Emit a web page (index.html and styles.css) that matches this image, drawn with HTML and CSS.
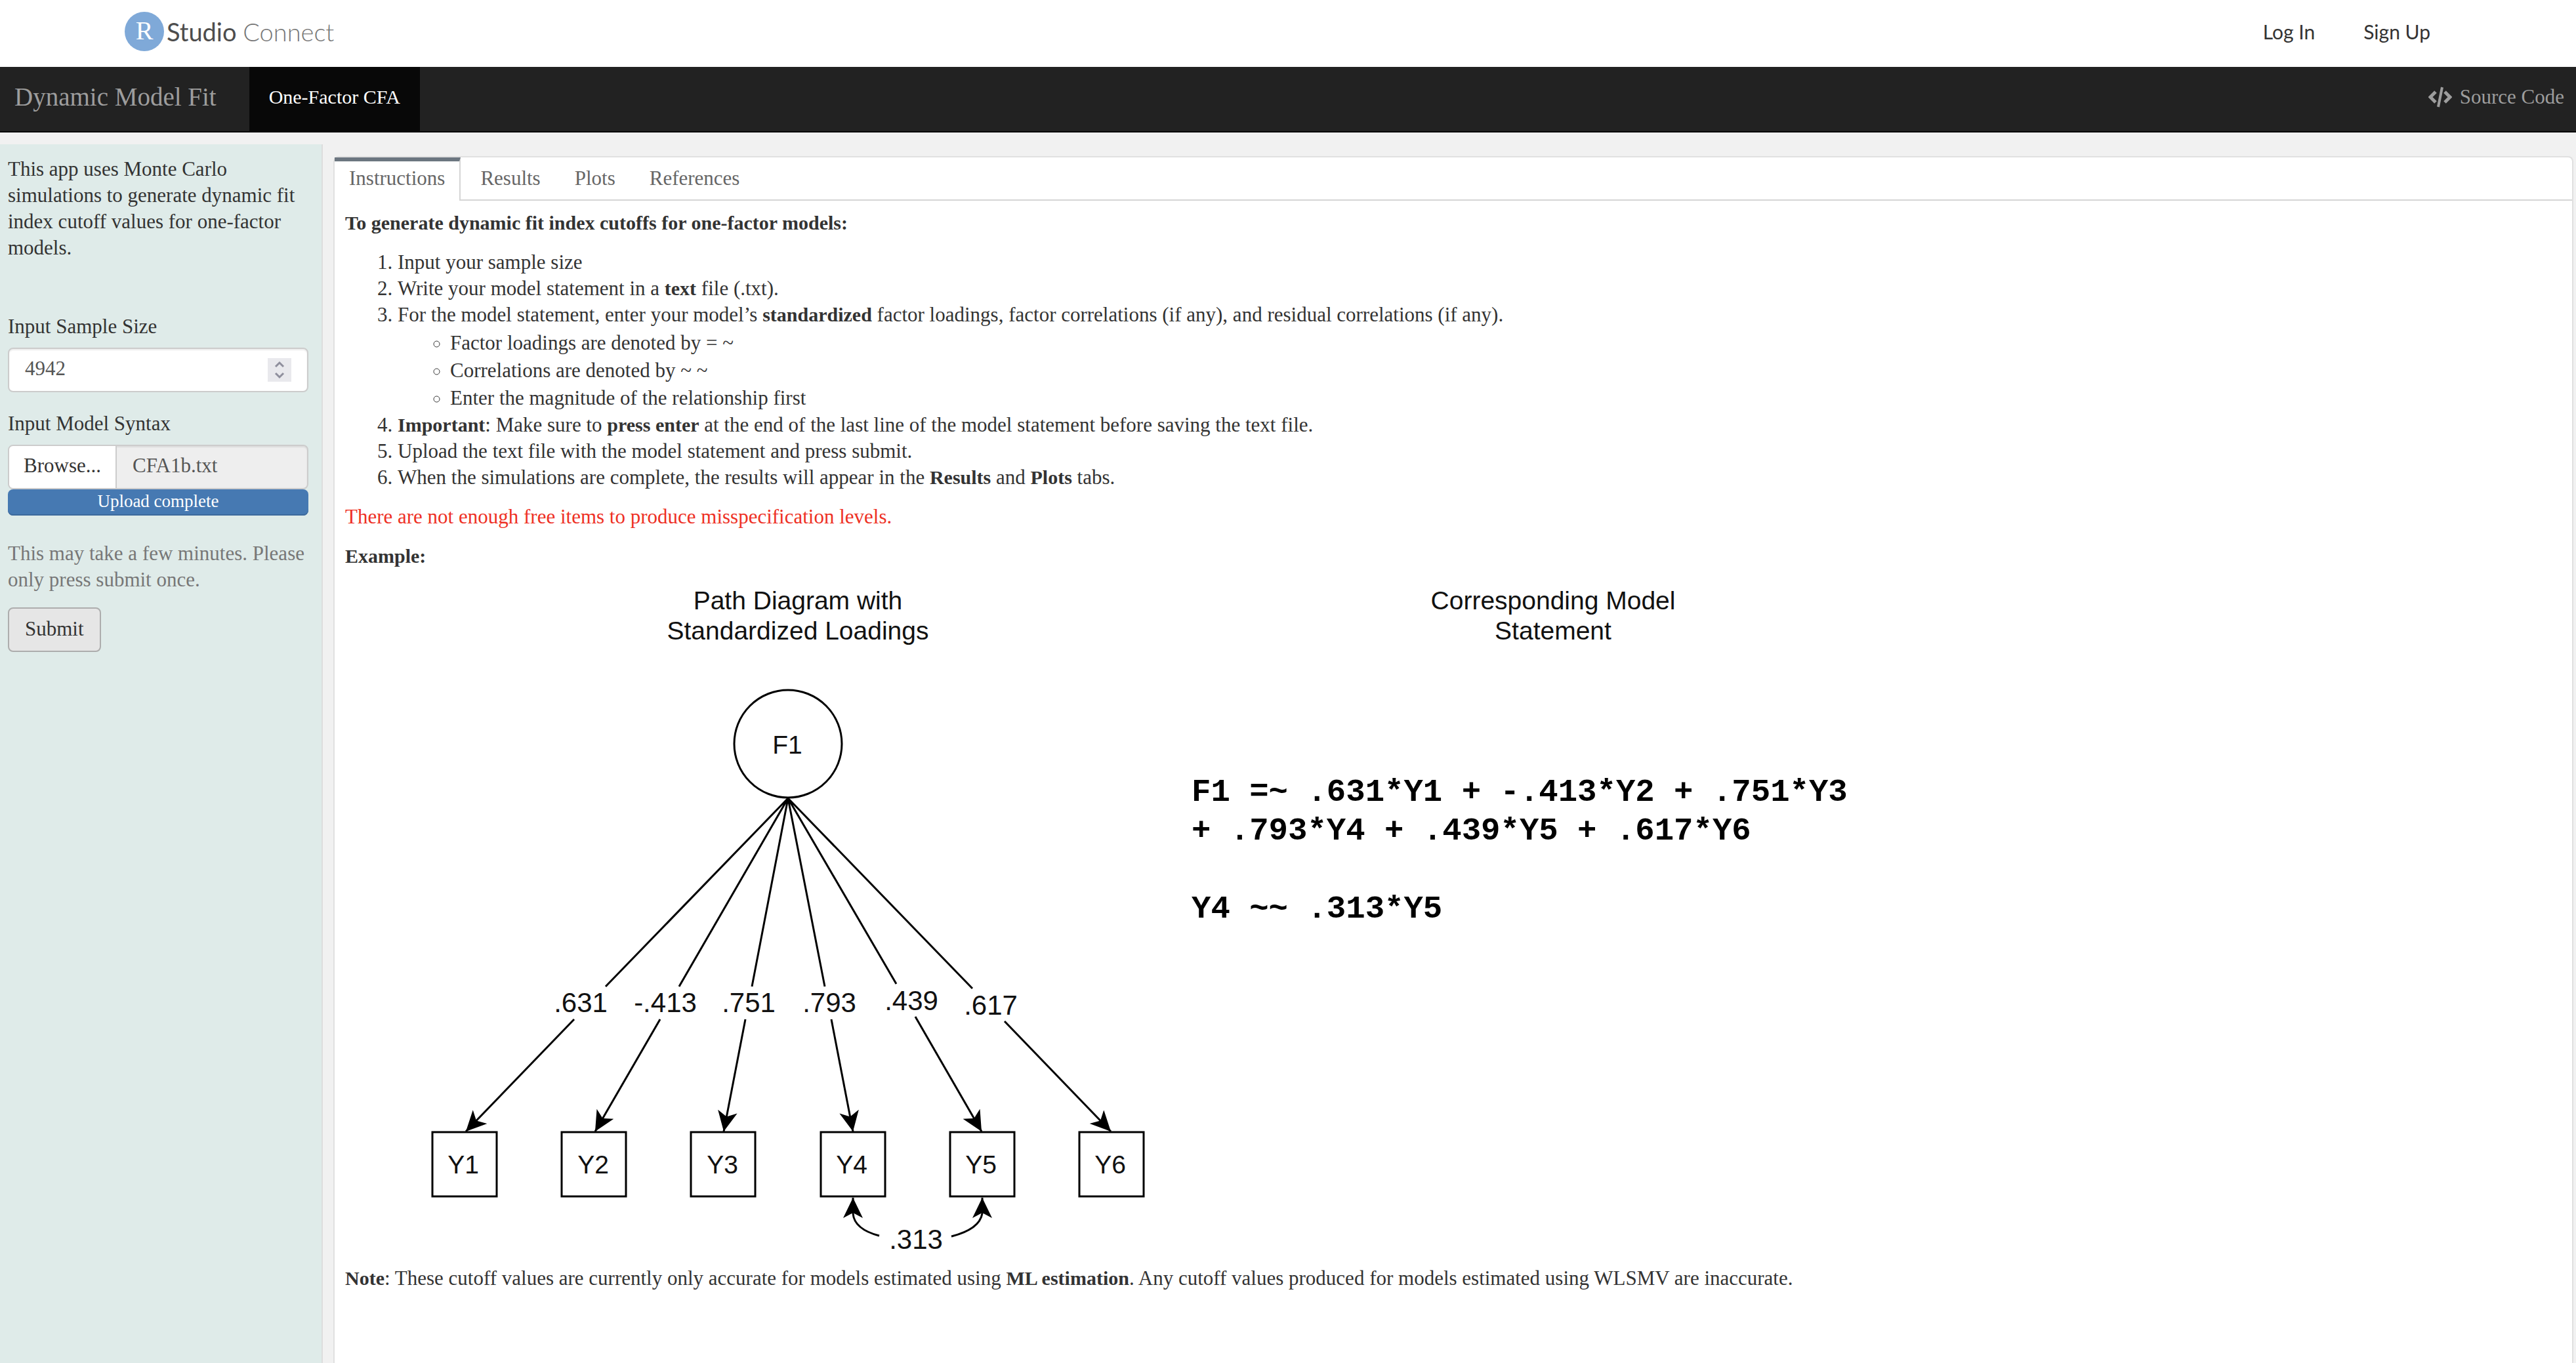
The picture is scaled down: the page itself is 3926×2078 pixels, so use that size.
FILE: index.html
```html
<!DOCTYPE html>
<html lang="en">
<head>
<meta charset="utf-8">
<title>Dynamic Model Fit</title>
<link rel="stylesheet" href="styles.css">
</head>
<body>
<header class="topbar">
  <a class="logo" href="#">
    <span class="logo-mark">R</span>
    <span class="logo-name">Studio <span class="logo-thin">Connect</span></span>
  </a>
  <nav class="account">
    <a href="#">Log In</a>
    <a href="#">Sign Up</a>
  </nav>
</header>
<nav class="navbar">
  <a class="brand" href="#">Dynamic Model Fit</a>
  <a class="nav-item active" href="#">One-Factor CFA</a>
  <a class="source" href="#">
    <svg class="code-icon" viewBox="0 0 36 32" aria-hidden="true">
      <path d="M11 8 3 16l8 8M25 8l8 8-8 8" fill="none" stroke="currentColor" stroke-width="5"/>
      <path d="M21 1 15 31" fill="none" stroke="currentColor" stroke-width="4"/>
    </svg>
    Source Code
  </a>
</nav>
<div class="layout">
  <aside class="sidebar">
    <p class="intro">This app uses Monte Carlo simulations to generate dynamic fit index cutoff values for one-factor models.</p>
    <form class="form">
      <div class="field">
        <label for="size">Input Sample Size</label>
        <div class="control number">
          <input id="size" type="number" value="4942">
          <span class="stepper" aria-hidden="true">
            <svg viewBox="0 0 36 36"><path d="M12 13l6-6 6 6M12 23l6 6 6-6" fill="none" stroke="#8f8f9d" stroke-width="3"/></svg>
          </span>
        </div>
      </div>
      <div class="field">
        <label for="file">Input Model Syntax</label>
        <div class="control upload">
          <button type="button" class="browse">Browse...</button>
          <input id="file" type="text" value="CFA1b.txt" readonly>
        </div>
        <div class="progress">Upload complete</div>
      </div>
      <p class="hint">This may take a few minutes. Please only press submit once.</p>
      <button type="submit" class="submit">Submit</button>
    </form>
  </aside>
  <main class="panel">
    <nav class="tabs">
      <a class="tab active" href="#">Instructions</a>
      <a class="tab" href="#">Results</a>
      <a class="tab" href="#">Plots</a>
      <a class="tab" href="#">References</a>
    </nav>
    <div class="content">
      <p><b>To generate dynamic fit index cutoffs for one-factor models:</b></p>
      <ol>
        <li>Input your sample size</li>
        <li>Write your model statement in a <b>text</b> file (.txt).</li>
        <li>For the model statement, enter your model’s <b>standardized</b> factor loadings, factor correlations (if any), and residual correlations (if any).
          <ul>
            <li>Factor loadings are denoted by = ~</li>
            <li>Correlations are denoted by ~ ~</li>
            <li>Enter the magnitude of the relationship first</li>
          </ul>
        </li>
        <li><b>Important</b>: Make sure to <b>press enter</b> at the end of the last line of the model statement before saving the text file.</li>
        <li>Upload the text file with the model statement and press submit.</li>
        <li>When the simulations are complete, the results will appear in the <b>Results</b> and <b>Plots</b> tabs.</li>
      </ol>
      <p class="error">There are not enough free items to produce misspecification levels.</p>
      <p><b>Example:</b></p>
      <svg class="diagram" viewBox="526 888 2400 1031" role="img" aria-label="Path diagram and model statement">
        <defs>
          <marker id="arrow" markerUnits="userSpaceOnUse" markerWidth="40" markerHeight="40" refX="31" refY="15" orient="auto-start-reverse" viewBox="0 0 40 40">
            <path d="M31 15 0 0 8 15 0 30z"/>
          </marker>
        </defs>
        <g class="title">
          <text x="1216" y="929">Path Diagram with</text>
          <text x="1216" y="975">Standardized Loadings</text>
          <text x="2367" y="929">Corresponding Model</text>
          <text x="2367" y="975">Statement</text>
        </g>
        <g class="shape">
          <circle cx="1201" cy="1134" r="82"/>
          <rect x="659" y="1726" width="98" height="98"/>
          <rect x="856" y="1726" width="98" height="98"/>
          <rect x="1053" y="1726" width="98" height="98"/>
          <rect x="1251" y="1726" width="98" height="98"/>
          <rect x="1448" y="1726" width="98" height="98"/>
          <rect x="1645" y="1726" width="98" height="98"/>
          <path d="M923 1504 1201 1217 1035 1504M1146 1504 1201 1217 1257 1504M1366 1500 1201 1217 1482 1507"/>
          <path marker-end="url(#arrow)" d="M875 1554 710 1725"/>
          <path marker-end="url(#arrow)" d="M1006 1554 907 1725"/>
          <path marker-end="url(#arrow)" d="M1136 1554 1103 1725"/>
          <path marker-end="url(#arrow)" d="M1267 1554 1300 1725"/>
          <path marker-end="url(#arrow)" d="M1395 1550 1496 1725"/>
          <path marker-end="url(#arrow)" d="M1531 1557 1693 1725"/>
          <path marker-start="url(#arrow)" d="M1300 1826V1850Q1302 1874 1340 1884"/>
          <path marker-start="url(#arrow)" d="M1497 1826V1850Q1493 1874 1450 1885"/>
        </g>
        <g class="node">
          <text x="1200" y="1149">F1</text>
          <text x="706" y="1789">Y1</text>
          <text x="904" y="1789">Y2</text>
          <text x="1101" y="1789">Y3</text>
          <text x="1298" y="1789">Y4</text>
          <text x="1495" y="1789">Y5</text>
          <text x="1692" y="1789">Y6</text>
        </g>
        <g class="weight">
          <text x="885" y="1543">.631</text>
          <text x="1014" y="1543">-.413</text>
          <text x="1141" y="1543">.751</text>
          <text x="1264" y="1543">.793</text>
          <text x="1389" y="1540">.439</text>
          <text x="1510" y="1547">.617</text>
          <text x="1396" y="1904">.313</text>
        </g>
        <g class="code">
          <text x="1816" y="1221">F1 =~ .631*Y1 + -.413*Y2 + .751*Y3</text>
          <text x="1816" y="1280">+ .793*Y4 + .439*Y5 + .617*Y6</text>
          <text x="1816" y="1399">Y4 ~~ .313*Y5</text>
        </g>
      </svg>
      <p><b>Note</b>: These cutoff values are currently only accurate for models estimated using <b>ML estimation</b>. Any cutoff values produced for models estimated using WLSMV are inaccurate.</p>
    </div>
  </main>
</div>
</body>
</html>
```
FILE: styles.css
```css
* { box-sizing: border-box; }
body {
  margin: 0;
  min-height: 100vh;
  display: flex;
  flex-direction: column;
  background: #f1f1f1;
  color: #333;
  font: 31px/40px "Palatino", "Liberation Serif", serif;
}
a { color: inherit; text-decoration: none; }
b { font-size: 30px; }
p { margin: 0 0 20px; }
input, button { font: inherit; color: inherit; }

.topbar {
  height: 102px;
  padding: 0 222px 6px 190px;
  display: flex;
  align-items: center;
  justify-content: space-between;
  background: #fff;
  font-family: "Lato", sans-serif;
  font-size: 30px;
}
.logo { display: flex; align-items: center; gap: 4px; }
.logo-mark {
  width: 60px;
  height: 60px;
  border-radius: 50%;
  background: #7fa9d8;
  color: #fff;
  font: 40px/58px "Liberation Serif", serif;
  text-align: center;
}
.logo-name { font-size: 38px; color: #4d4d4d; }
.logo-thin { font-weight: 300; color: #777; }
.account { display: flex; gap: 74px; }

.navbar {
  height: 100px;
  padding-right: 18px;
  display: flex;
  align-items: stretch;
  background: #222;
  border-bottom: 2px solid #080808;
  color: #9d9d9d;
  line-height: 92px;
}
.brand { padding: 0 50px 0 22px; font-size: 39px; }
.nav-item { padding: 0 30px; font-size: 30px; }
.nav-item.active { background: #080808; color: #fff; }
.source { margin-left: auto; display: flex; gap: 12px; }
.code-icon { width: 36px; height: 32px; margin-top: 30px; }

.layout { flex: 1; display: flex; align-items: stretch; gap: 16px; }
.sidebar {
  flex: 0 0 492px;
  min-width: 0;
  margin-top: 18px;
  padding: 18px 20px 18px 12px;
  background: #dfebe9;
  border-right: 2px solid #ddd;
}
.intro { margin-bottom: 80px; }
.field { margin-bottom: 28px; }
.field label { display: block; margin-bottom: 12px; }
.control {
  height: 68px;
  display: flex;
  border: 2px solid #ccc;
  border-radius: 8px;
  background: #fff;
  box-shadow: inset 0 2px 2px rgba(0, 0, 0, .075);
  overflow: hidden;
}
.control input {
  flex: 1;
  min-width: 0;
  padding: 0 0 4px 24px;
  border: 0;
  background: none;
  color: #555;
  appearance: textfield;
}
.number { align-items: center; padding-right: 24px; }
.stepper { width: 36px; height: 36px; background: #e9e9ed; }
.stepper svg { display: block; }
.upload { background: #eee; }
.browse {
  width: 164px;
  padding: 0 0 4px;
  border: 0;
  border-right: 2px solid #ccc;
  background: #fff;
}
.progress {
  height: 40px;
  border-radius: 8px;
  background: #4679b2;
  box-shadow: inset 0 -2px 0 #3d6a9d;
  color: #fff;
  font-size: 27px;
  line-height: 36px;
  text-align: center;
}
.hint { margin: 0 0 22px; color: #777; }
.field + .hint { margin-top: 38px; }
.submit {
  height: 68px;
  padding: 0 24px 2px;
  border: 2px solid #adadad;
  border-radius: 8px;
  background: #e6e6e6;
}

.panel {
  flex: 1;
  min-width: 0;
  margin: 36px 4px 0 0;
  background: #fff;
  border: 2px solid #e0e0e0;
  border-bottom: 0;
  border-radius: 8px 8px 0 0;
}
.tabs {
  display: flex;
  height: 66px;
  box-shadow: inset 0 -2px 0 #d5d5d5;
  color: #666;
}
.tab { padding: 12px 22px 0 30px; }
.tab.active {
  padding: 6px 22px 0 22px;
  background: #fff;
  border-top: 6px solid #6c7680;
  border-right: 2px solid #d5d5d5;
}
.content { padding: 14px 16px 20px; }
ol { margin: 0 0 20px; padding-left: 80px; }
ul { margin: 0; padding: 2px 0 0 80px; list-style: circle; line-height: 42px; }
.error { color: #ee3024; }

.diagram { display: block; width: 2400px; max-width: 100%; margin-bottom: 10px; }
.diagram text { fill: #111; font-family: "Liberation Sans", Arial, sans-serif; text-anchor: middle; }
.title text, .node text { font-size: 39px; }
.weight text { font-size: 42px; }
.diagram .code text { font: bold 49px "Liberation Mono", monospace; fill: #000; text-anchor: start; white-space: pre; }
.shape { fill: none; stroke: #000; stroke-width: 3; }
.shape marker, marker path { fill: #000; stroke: none; }
```
